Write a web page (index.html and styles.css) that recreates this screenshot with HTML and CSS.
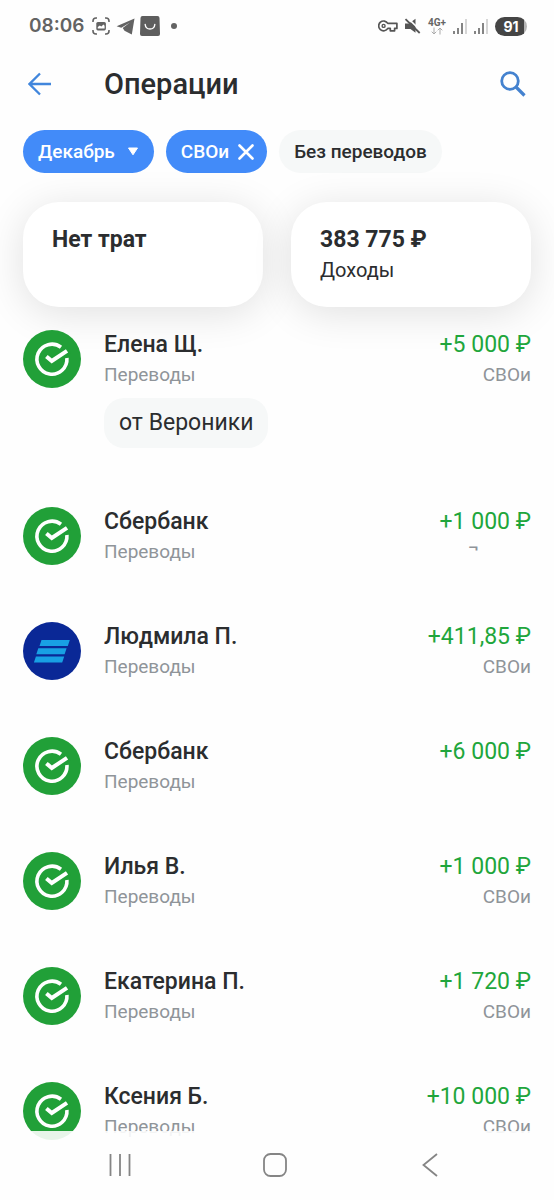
FILE: index.html
```html
<!DOCTYPE html>
<html lang="ru">
<head>
<meta charset="utf-8">
<meta name="viewport" content="width=device-width, initial-scale=1">
<title>Операции</title>
<link rel="stylesheet" href="styles.css">
</head>
<body>
<svg class="defs" width="0" height="0" aria-hidden="true">
  <symbol id="sber" viewBox="0 0 58 58">
    <circle cx="29" cy="29" r="29" fill="#21a038"/>
    <path d="M38 17.200A15 15 0 1 0 43.900 28" fill="none" stroke="#fff" stroke-width="3.600"/>
    <path d="M29 31.200 46 19.600" fill="none" stroke="#21a038" stroke-width="7"/>
    <path d="M23.400 26.400 28.800 31 44 20.800" fill="none" stroke="#fff" stroke-width="4"/>
  </symbol>
  <symbol id="vtb" viewBox="0 0 58 58">
    <circle cx="29" cy="29" r="29" fill="#0a2896"/>
    <path d="M18.500 18h28.300l-2 6H16.500zM15.300 26.200h28.300l-2 6H13.300zM12.900 34.400h28.300l-2 6H10.900z" fill="#18a0e4"/>
  </symbol>
</svg>
<div class="app">
  <div class="status">
    <div class="status-group">
      <span class="clock">08:06</span>
      <svg class="ic-shot" width="18" height="18" viewBox="0 0 18 18" aria-hidden="true">
        <path d="M1 5V4a3 3 0 0 1 3-3h1M13 1h1a3 3 0 0 1 3 3v1M17 13v1a3 3 0 0 1-3 3h-1M5 17H4a3 3 0 0 1-3-3v-1" fill="none" stroke="#636363" stroke-width="1.600"/>
        <rect x="4.300" y="5" width="9.600" height="8.400" rx="1.600" fill="#636363"/>
        <path d="M5.800 11.600V10l2-1.600 1.600 1 2-1.800 1.200 1.200v2.800z" fill="#fff"/>
      </svg>
      <svg class="ic-plane" width="19" height="17" viewBox="0 0 19 17" aria-hidden="true">
        <path d="M.6 8.200 18.500.5 15.800 16.500 8.500 12.800 6.700 9.900 14 4.500 5.300 9.700z" fill="#636363"/>
      </svg>
      <svg class="ic-bag" width="20" height="20" viewBox="0 0 20 20" aria-hidden="true">
        <path d="M2.500 0h15a2 2 0 0 1 2 2l.5 16a2 2 0 0 1-2 2H2a2 2 0 0 1-2-2L.5 2a2 2 0 0 1 2-2z" fill="#5e5e5e"/>
        <path d="M5.200 8.500c.6 6 9 6 9.600 0" fill="none" stroke="#fff" stroke-width="1.400" stroke-linecap="round"/>
      </svg>
      <span class="dot"></span>
    </div>
    <div class="status-group">
      <svg width="20" height="12" viewBox="0 0 20 12" aria-hidden="true">
        <path d="M9.800 3.400A4.900 4.900 0 1 0 9.800 8.400H12.300V10.800H16.600V8.400H18.900V3.400z" fill="none" stroke="#555" stroke-width="1.700" stroke-linejoin="round"/>
        <circle cx="5.600" cy="5.900" r="1.500" fill="none" stroke="#555" stroke-width="1.400"/>
      </svg>
      <svg class="ic-mute" width="17" height="16" viewBox="0 0 17 16" aria-hidden="true">
        <path d="M1 5.500h4L11.500.8v14L6.500 11H1z" fill="#555"/>
        <path d="M3.300-.4 17 12.800" stroke="#fefefe" stroke-width="1.600"/>
        <path d="M1.500 1.200 15.700 15" stroke="#555" stroke-width="1.800"/>
      </svg>
      <span class="net">
        <span class="net-label">4G+</span>
        <svg width="12" height="8" viewBox="0 0 12 8" aria-hidden="true">
          <path d="M3 .5v6.500M.7 4.700 3 7l2.300-2.300M9 7.500V1M6.700 3.300 9 1l2.300 2.300" fill="none" stroke="#aaa"/>
        </svg>
      </span>
      <svg class="ic-signal" width="14" height="15" viewBox="0 0 14 15" aria-hidden="true">
        <path d="M1 12v3M5 9v6M9 4v11" stroke="#666" stroke-width="1.600"/><path d="M13 0v15" stroke="#ccc" stroke-width="1.600"/>
      </svg>
      <svg class="ic-signal" width="14" height="15" viewBox="0 0 14 15" aria-hidden="true">
        <path d="M1 12v3M5 9v6M9 4v11" stroke="#666" stroke-width="1.600"/><path d="M13 0v15" stroke="#ccc" stroke-width="1.600"/>
      </svg>
      <span class="battery">91</span>
    </div>
  </div>

  <header class="top">
    <button class="icon-btn" aria-label="Назад">
      <svg width="24" height="24" viewBox="0 0 24 24" aria-hidden="true"><path d="M23 12H2M12 1.500 1.500 12 12 22.500" fill="none" stroke="#4186dc" stroke-width="2.300"/></svg>
    </button>
    <h1 class="title">Операции</h1>
    <button class="icon-btn" aria-label="Поиск">
      <svg width="26" height="26" viewBox="0 0 26 26" aria-hidden="true"><circle cx="10" cy="10" r="8.300" fill="none" stroke="#4482cf" stroke-width="2.800"/><path d="m16 16 8.500 8.500" stroke="#4482cf" stroke-width="3.200"/></svg>
    </button>
  </header>

  <div class="filters">
    <button class="chip chip-on">Декабрь
      <svg width="12" height="9" viewBox="0 0 12 9" aria-hidden="true"><path d="M1.500 1h9L6 7.800z" fill="#fff" stroke="#fff" stroke-linejoin="round"/></svg>
    </button>
    <button class="chip chip-on chip-close">СВОи
      <svg width="16" height="16" viewBox="0 0 16 16" aria-hidden="true"><path d="m1.500 1.500 13 13M14.500 1.500l-13 13" stroke="#fff" stroke-width="2.600" stroke-linecap="round"/></svg>
    </button>
    <button class="chip">Без переводов</button>
  </div>

  <section class="cards">
    <div class="card"><strong class="card-title">Нет трат</strong></div>
    <div class="card"><strong class="card-title">383 775 ₽</strong><span class="card-sub">Доходы</span></div>
  </section>

  <ul class="list">
    <li class="row row-note">
      <svg class="logo" aria-hidden="true"><use href="#sber"/></svg>
      <div class="who"><span class="name">Елена Щ.</span><span class="sub">Переводы</span><span class="note">от Вероники</span></div>
      <div class="sum"><span class="amount">+5 000 ₽</span><span class="sub">СВОи</span></div>
    </li>
    <li class="row">
      <svg class="logo" aria-hidden="true"><use href="#sber"/></svg>
      <div class="who"><span class="name">Сбербанк</span><span class="sub">Переводы</span></div>
      <div class="sum"><span class="amount">+1 000 ₽</span><span class="mark">¬</span></div>
    </li>
    <li class="row">
      <svg class="logo" aria-hidden="true"><use href="#vtb"/></svg>
      <div class="who"><span class="name">Людмила П.</span><span class="sub">Переводы</span></div>
      <div class="sum"><span class="amount">+411,85 ₽</span><span class="sub">СВОи</span></div>
    </li>
    <li class="row">
      <svg class="logo" aria-hidden="true"><use href="#sber"/></svg>
      <div class="who"><span class="name">Сбербанк</span><span class="sub">Переводы</span></div>
      <div class="sum"><span class="amount">+6 000 ₽</span></div>
    </li>
    <li class="row">
      <svg class="logo" aria-hidden="true"><use href="#sber"/></svg>
      <div class="who"><span class="name">Илья В.</span><span class="sub">Переводы</span></div>
      <div class="sum"><span class="amount">+1 000 ₽</span><span class="sub">СВОи</span></div>
    </li>
    <li class="row">
      <svg class="logo" aria-hidden="true"><use href="#sber"/></svg>
      <div class="who"><span class="name">Екатерина П.</span><span class="sub">Переводы</span></div>
      <div class="sum"><span class="amount">+1 720 ₽</span><span class="sub">СВОи</span></div>
    </li>
    <li class="row">
      <svg class="logo" aria-hidden="true"><use href="#sber"/></svg>
      <div class="who"><span class="name">Ксения Б.</span><span class="sub">Переводы</span></div>
      <div class="sum"><span class="amount">+10 000 ₽</span><span class="sub">СВОи</span></div>
    </li>
  </ul>
</div>

<nav class="nav">
  <button class="nav-btn" aria-label="Последние приложения"><svg width="24" height="24" viewBox="0 0 24 24" aria-hidden="true"><path d="M2.500 1v22M12 1v22M21.500 1v22" stroke="#858585" stroke-width="1.800"/></svg></button>
  <button class="nav-btn" aria-label="Главный экран"><svg width="24" height="24" viewBox="0 0 24 24" aria-hidden="true"><rect x="1" y="1" width="22" height="22" rx="6.500" fill="none" stroke="#858585" stroke-width="1.800"/></svg></button>
  <button class="nav-btn" aria-label="Назад в системе"><svg width="24" height="24" viewBox="0 0 24 24" aria-hidden="true"><path d="M19 1 5.500 12 19 23" fill="none" stroke="#858585" stroke-width="1.800"/></svg></button>
</nav>
</body>
</html>
```
FILE: styles.css
```css
* {
  box-sizing: border-box;
}

body {
  margin: 0;
  background: #fefefe;
  color: #2b2d2f;
  font-family: Roboto, "Liberation Sans", sans-serif;
}

button {
  margin: 0;
  padding: 0;
  border: 0;
  background: none;
  color: inherit;
  font: inherit;
}

svg {
  display: block;
  flex: none;
}

.defs {
  position: absolute;
}

.app {
  height: 100vh;
  overflow: hidden;
}

.status {
  display: flex;
  justify-content: space-between;
  align-items: center;
  height: 52px;
  padding: 0 27px 0 29px;
}

.status-group {
  display: flex;
  align-items: center;
}

.clock {
  margin-right: 8px;
  color: #636363;
  font: 600 19px/24px Inter, Roboto, sans-serif;
}

.ic-plane {
  margin: 0 5px 0 6px;
}

.dot {
  width: 6px;
  height: 6px;
  margin-left: 11px;
  border-radius: 50%;
  background: #636363;
}

.ic-mute {
  margin: 0 7px 0 6px;
}

.net {
  display: flex;
  flex-direction: column;
  align-items: center;
  margin-right: 7px;
  color: #666;
}

.net-label {
  font: 700 10px/9px Roboto, sans-serif;
}

.ic-signal {
  margin-right: 7px;
}

.battery {
  width: 32px;
  border-radius: 10px;
  background: linear-gradient(90deg, #454545 92%, #b5b5b5 92%);
  color: #fff;
  font: 700 14px/19px Inter, Roboto, sans-serif;
  text-align: center;
}

.top {
  display: flex;
  align-items: center;
  height: 64px;
  padding: 0 28px;
}

.title {
  flex: 1;
  margin: 0 0 0 52px;
  font-size: 29px;
  font-weight: 500;
  line-height: 36px;
}

.filters {
  display: flex;
  gap: 12px;
  padding: 14px 23px 0;
}

.chip {
  display: flex;
  align-items: center;
  gap: 12px;
  height: 43px;
  padding: 0 15px;
  border-radius: 22px;
  background: #f6f8f8;
  font-size: 19px;
  font-weight: 500;
  line-height: 24px;
  white-space: nowrap;
}

.chip-on {
  background: #428bf9;
  color: #fff;
}

.chip-close {
  gap: 9px;
  padding-right: 13px;
}

.cards {
  display: grid;
  grid-template-columns: 1fr 1fr;
  gap: 28px;
  padding: 29px 23px 0;
}

.card {
  display: flex;
  flex-direction: column;
  min-height: 105px;
  padding: 22px 29px;
  border-radius: 36px;
  background: #fff;
  box-shadow: 0 6px 40px rgba(0, 0, 0, 0.12);
}

.card-title {
  font-size: 23px;
  font-weight: 700;
  line-height: 31px;
}

.card-sub {
  font-size: 20px;
  line-height: 30px;
}

.list {
  margin: 0;
  padding: 23px 23px 0;
  list-style: none;
}

.row {
  display: flex;
  align-items: flex-start;
  min-height: 115px;
}

.row-note {
  min-height: 177px;
}

.logo {
  width: 58px;
  height: 58px;
}

.who,
.sum {
  display: flex;
  flex-direction: column;
}

.who {
  flex: 1;
  align-items: flex-start;
  margin-left: 23px;
}

.sum {
  align-items: flex-end;
}

.name,
.amount {
  font-size: 23px;
  line-height: 30px;
}

.name {
  font-weight: 500;
}

.amount {
  color: #1fa63c;
}

.sub {
  color: #8f9499;
  font-size: 19px;
  line-height: 30px;
}

.mark {
  margin-right: 52px;
  color: #8f9499;
  font-size: 20px;
  line-height: 20px;
}

.note {
  margin-top: 8px;
  padding: 10px 15px;
  border-radius: 20px;
  background: #f6f8f8;
  font-size: 23px;
  line-height: 30px;
}

.nav {
  position: fixed;
  right: 0;
  bottom: 0;
  left: 0;
  display: flex;
  height: 69px;
  padding: 0 46px 2px 42px;
  background: rgba(254, 254, 254, 0.9);
}

.nav-btn {
  display: flex;
  flex: 1;
  align-items: center;
  justify-content: center;
}
```
